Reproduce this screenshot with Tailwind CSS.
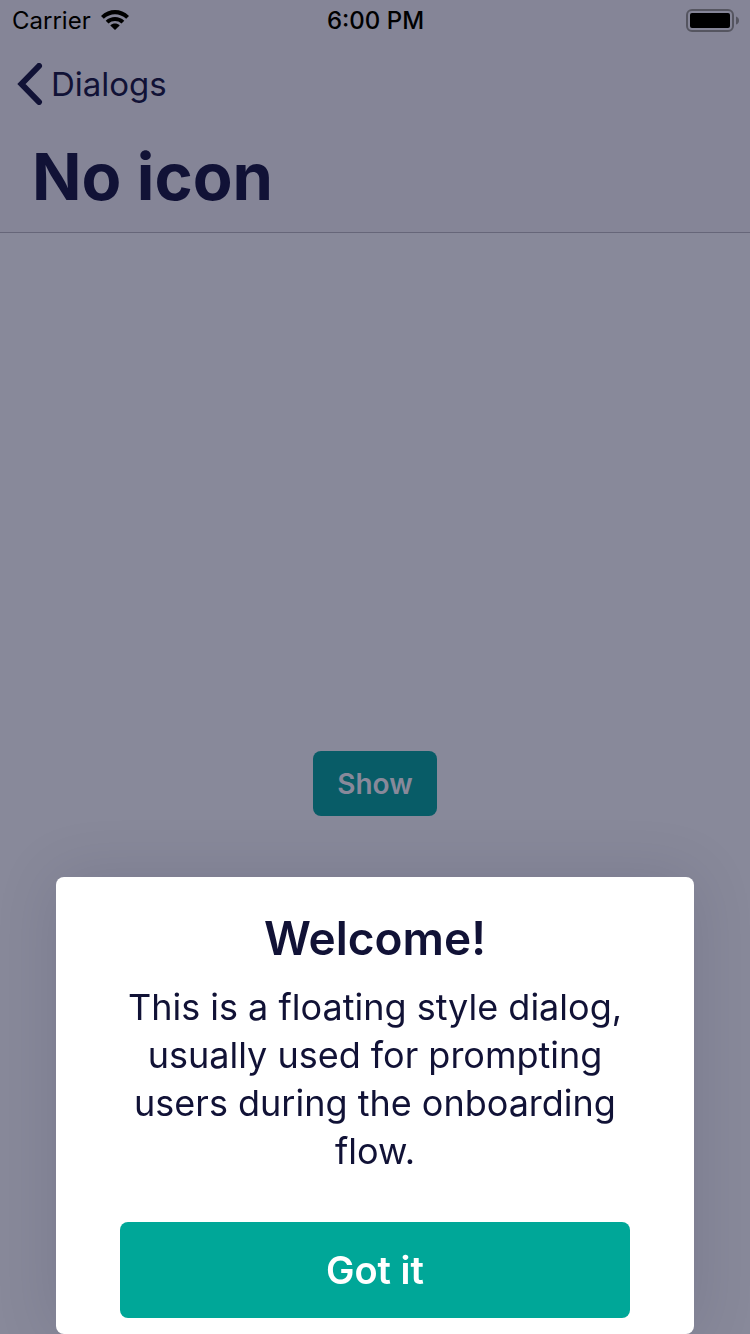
<!DOCTYPE html>
<html lang="en">
<head>
<meta charset="utf-8">
<meta name="viewport" content="width=device-width, initial-scale=1">
<title>No icon</title>
<script src="https://cdn.jsdelivr.net/npm/@tailwindcss/browser@4"></script>
</head>
<body class="flex min-h-screen flex-col overflow-hidden bg-[#88899a] font-['Inter','Liberation_Sans',sans-serif] text-[#111236]">
  <header class="border-b border-[#666679] bg-[#858597]">
    <div class="grid h-[42px] grid-cols-3 items-center pr-[11px] pl-3 text-2xl leading-10 text-black">
      <div class="flex items-center gap-[10px]">
        <span>Carrier</span>
        <svg class="mb-0.5 h-5 w-7" viewBox="0 0 28 20" aria-label="Wi-Fi">
          <path d="M0 5.9C8-1.9 20-1.9 28 5.9L25.2 8.8C18.7 2.6 9.3 2.6 2.8 8.8Z"/>
          <path d="M4.7 10.7C10 5.7 18 5.7 23.3 10.7L20.5 13.5C16.8 10.2 11.2 10.2 7.5 13.5Z"/>
          <path d="M9.3 15.4C12 13 16 13 18.7 15.4L14 20Z"/>
        </svg>
      </div>
      <time class="text-center font-medium">6:00 PM</time>
      <svg class="mb-0.5 h-[23px] w-[53px] justify-self-end" viewBox="0 0 53 23" aria-label="Battery full">
        <rect x="1" y="1" width="46" height="21" rx="5" fill="none" stroke="#555560" stroke-width="2"/>
        <rect x="4" y="4" width="40" height="15" rx="2"/>
        <path d="M50 7.5Q53 8.5 53 11.5T50 15.5Z" fill="#555560"/>
      </svg>
    </div>
    <nav class="flex h-[84px] items-center px-4">
      <a href="#" class="flex items-center gap-2 text-[33px] leading-10">
        <svg class="h-[42px] w-[27px]" viewBox="0 0 27 42" fill="none" stroke="currentColor" stroke-width="6" stroke-linecap="round" stroke-linejoin="miter" aria-hidden="true"><path d="M23 3L5.5 21L23 39"/></svg>
        <span>Dialogs</span>
      </a>
    </nav>
    <h1 class="px-8 pt-[11px] pb-[15px] text-[65px] leading-20 font-bold">No icon</h1>
  </header>
  <main class="flex grow items-center justify-center">
    <button type="button" class="h-[65px] rounded-lg bg-[#085c67] px-6 text-[28px] leading-10 font-semibold text-[#88899a]">Show</button>
  </main>
  <section role="dialog" aria-modal="true" aria-labelledby="dialog-title" class="fixed inset-x-14 bottom-0 flex flex-col rounded-lg bg-white px-16 pt-[33px] pb-4 text-center shadow-[0_0_64px_rgba(17,18,54,0.12)]">
    <h2 id="dialog-title" class="text-[46px] leading-14 font-semibold">Welcome!</h2>
    <p class="mt-[17px] text-[36px] leading-12">This is a floating style dialog, usually used for prompting users during the onboarding flow.</p>
    <button type="button" class="mt-[47px] h-24 rounded-lg bg-[#00a798] text-[38px] leading-12 font-semibold text-white">Got it</button>
  </section>
</body>
</html>
